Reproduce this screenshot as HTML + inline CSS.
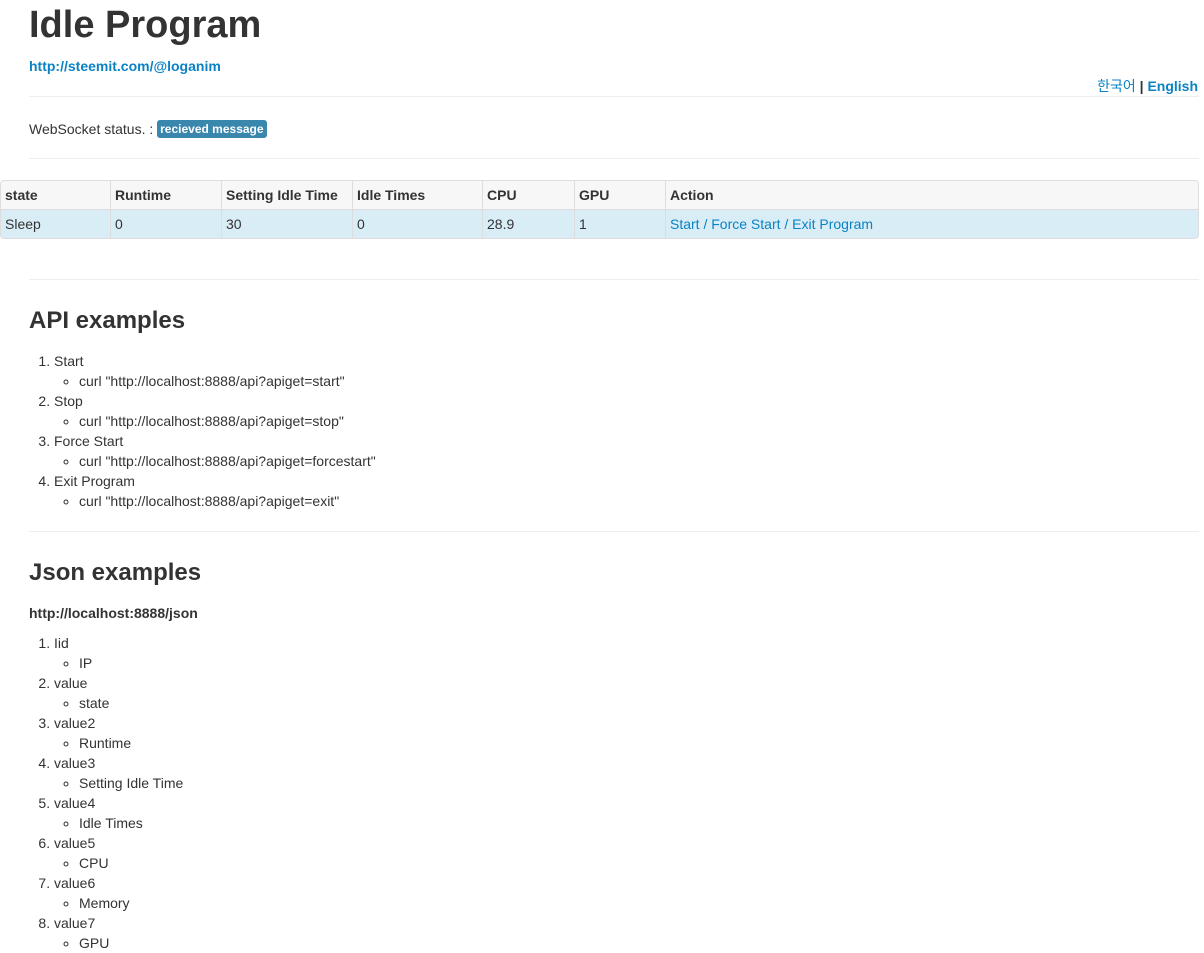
<!DOCTYPE html>
<html><head><meta charset="utf-8">
<style>
body{margin:0;font-family:"Liberation Sans","Noto Sans CJK KR",sans-serif;font-size:14px;color:#333;background:#fff;width:1204px;height:944px;overflow:hidden;position:relative}
a{color:#0a82c4;text-decoration:none}
.abs{position:absolute}
h1{position:absolute;left:29px;top:3px;margin:0;font-size:38px;line-height:44px;font-weight:bold}
h2{position:absolute;left:29px;margin:0;font-size:24px;line-height:30px;font-weight:bold}
.hr{position:absolute;left:29px;width:1170px;height:1px;background:#eee}
.label{display:inline-block;background:#3a87ad;color:#fff;font-size:12px;font-weight:bold;line-height:18px;padding:0 3px;border-radius:3px;vertical-align:1px}
table{position:absolute;left:0;top:180px;width:1199px;border-collapse:separate;border-spacing:0;border:1px solid #ddd;border-radius:4px;overflow:hidden}
td,th{text-align:left;padding:0 4px;height:28px;border-left:1px solid #ddd;font-size:14px}
td:first-child,th:first-child{border-left:none}
th{background:#f7f7f7;font-weight:bold;border-bottom:1px solid #ddd}
td{background:#d9edf7}
ol{position:absolute;left:0;margin:0;padding-left:54px;line-height:20px}
ol ul{padding-left:25px;margin:0;list-style-type:circle}
</style></head><body>
<h1>Idle Program</h1>
<div class="abs" style="left:29px;top:58px;font-weight:bold;line-height:16px"><a href="#">http://steemit.com/@loganim</a></div>
<div class="abs" style="right:6px;top:77px;font-weight:bold;line-height:18px"><a href="#" style="font-weight:normal">한국어</a> | <a href="#">English</a></div>
<div class="hr" style="top:96px"></div>
<div class="abs" style="left:29px;top:119px;line-height:20px">WebSocket status. : <span class="label">recieved message</span></div>
<div class="hr" style="top:158px"></div>
<table>
<tr><th style="width:101px">state</th><th style="width:102px">Runtime</th><th style="width:122px">Setting Idle Time</th><th style="width:121px">Idle Times</th><th style="width:83px">CPU</th><th style="width:82px">GPU</th><th>Action</th></tr>
<tr><td>Sleep</td><td>0</td><td>30</td><td>0</td><td>28.9</td><td>1</td><td><a href="#">Start</a> <a>/</a> <a href="#">Force Start</a> <a>/</a> <a href="#">Exit Program</a></td></tr>
</table>
<div class="hr" style="top:279px"></div>
<h2 style="top:306px">API examples</h2>
<ol style="top:351px">
<li>Start<ul><li>curl "http://localhost:8888/api?apiget=start"</li></ul></li>
<li>Stop<ul><li>curl "http://localhost:8888/api?apiget=stop"</li></ul></li>
<li>Force Start<ul><li>curl "http://localhost:8888/api?apiget=forcestart"</li></ul></li>
<li>Exit Program<ul><li>curl "http://localhost:8888/api?apiget=exit"</li></ul></li>
</ol>
<div class="hr" style="top:531px"></div>
<h2 style="top:558px">Json examples</h2>
<div class="abs" style="left:29px;top:605px;font-size:14px;font-weight:bold;line-height:16px">http://localhost:8888/json</div>
<ol style="top:633px">
<li>Iid<ul><li>IP</li></ul></li>
<li>value<ul><li>state</li></ul></li>
<li>value2<ul><li>Runtime</li></ul></li>
<li>value3<ul><li>Setting Idle Time</li></ul></li>
<li>value4<ul><li>Idle Times</li></ul></li>
<li>value5<ul><li>CPU</li></ul></li>
<li>value6<ul><li>Memory</li></ul></li>
<li>value7<ul><li>GPU</li></ul></li>
</ol>
</body></html>
